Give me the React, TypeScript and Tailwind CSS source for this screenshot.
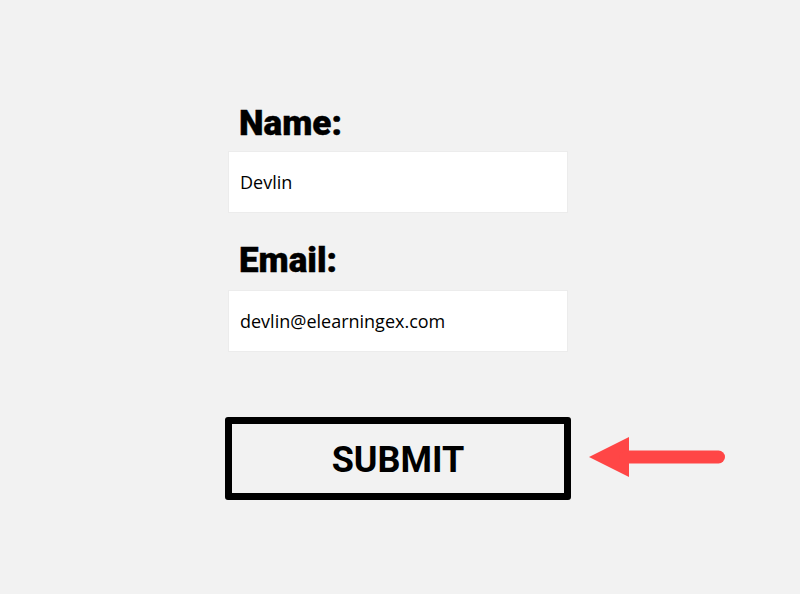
import { useState } from "react";

const Arrow = () => (
  <svg
    width="140"
    height="44"
    viewBox="0 0 140 44"
    className="absolute left-[363px] top-[18px]"
  >
    <polygon points="1,22 41,2 41,42" fill="#ff4646" />
    <line x1="38" y1="22" x2="130.5" y2="22" stroke="#ff4646" strokeWidth="13" strokeLinecap="round" />
  </svg>
);

const App = () => {
  const [name, setName] = useState("Devlin");
  const [email, setEmail] = useState("devlin@elearningex.com");

  return (
    <div className="w-full h-[594px] bg-[#f2f2f2] flex flex-col items-center pt-[106px] pr-[4px] overflow-hidden">
      <form className="w-[346px] flex flex-col" onSubmit={(e) => e.preventDefault()}>
        <label className="pl-[14px] text-[35px] leading-[35px] font-black text-black font-['Roboto',sans-serif] [-webkit-text-stroke:0.4px_black]">
          Name:
        </label>
        <input
          value={name}
          onChange={(e) => setName(e.target.value)}
          className="mx-[3px] mt-[10px] h-[62px] bg-white border border-[#ececec] pl-[11px] text-[18px] text-black font-['Open_Sans',sans-serif] outline-none"
        />

        <label className="mt-[30px] pl-[14px] text-[35px] leading-[35px] font-black text-black font-['Roboto',sans-serif] [-webkit-text-stroke:0.4px_black]">
          Email:
        </label>
        <input
          value={email}
          onChange={(e) => setEmail(e.target.value)}
          className="mx-[3px] mt-[12px] h-[62px] bg-white border border-[#ececec] pl-[11px] text-[18px] text-black font-['Open_Sans',sans-serif] outline-none"
        />

        <div className="relative mt-[65px]">
          <button
            type="submit"
            className="w-[346px] h-[83px] border-[7px] border-black rounded-[3px] bg-transparent text-[36px] font-bold text-black font-['Roboto',sans-serif] flex items-center justify-center pt-[2px]"
          >
            SUBMIT
          </button>
          <Arrow />
        </div>
      </form>
    </div>
  );
};

export default App;
